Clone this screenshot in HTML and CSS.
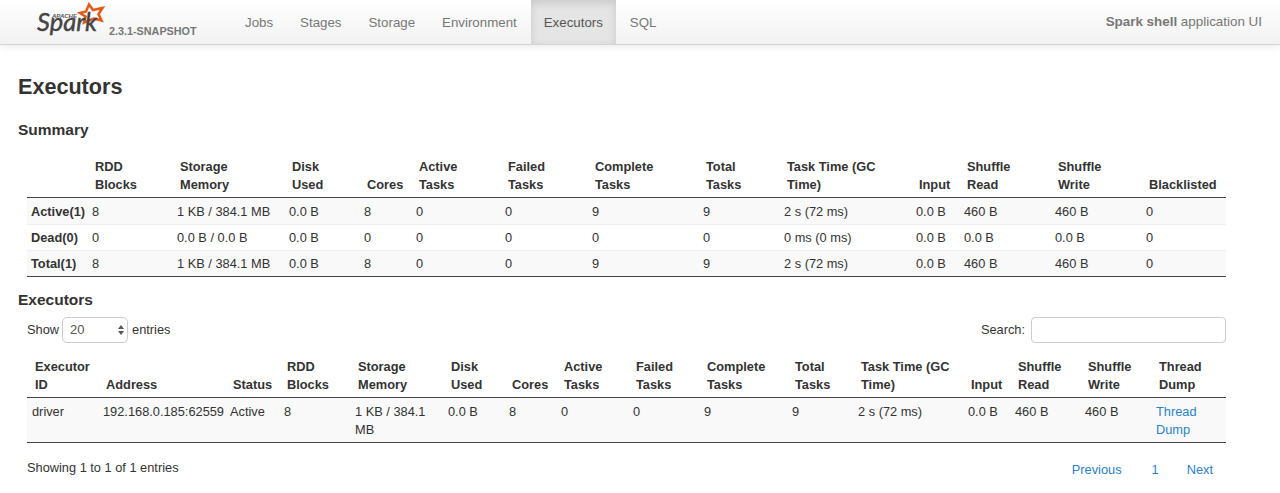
FILE: index.html
```html
<!DOCTYPE html>
<html lang="en">
<head>
<meta charset="utf-8">
<title>Executors</title>
<link rel="stylesheet" href="styles.css">
</head>
<body>
<header class="navbar">
  <a class="brand" href="#">
    <svg class="logo" width="70" height="36" viewBox="0 0 70 36">
      <path class="star" d="M54 2.5 L58 8 L67.5 6 L63.5 12 L66.5 18.5 L59 16.5 L49 20.5 L50.5 14.5 L45 11 L51 9.5 Z"/>
      <text class="logo-apache" x="17" y="15.5" textLength="25" lengthAdjust="spacingAndGlyphs">APACHE</text>
      <text class="logo-spark" x="2" y="29" textLength="60" lengthAdjust="spacingAndGlyphs">Spark</text>
    </svg>
    <span class="version">2.3.1-SNAPSHOT</span>
  </a>
  <nav class="nav">
    <a href="#">Jobs</a>
    <a href="#">Stages</a>
    <a href="#">Storage</a>
    <a href="#">Environment</a>
    <a href="#" class="active">Executors</a>
    <a href="#">SQL</a>
  </nav>
  <p class="app-name"><strong>Spark shell</strong> application UI</p>
</header>

<main class="content">
  <h3>Executors</h3>
  <h4>Summary</h4>
  <table class="grid summary">
    <thead>
      <tr>
        <th></th><th>RDD Blocks</th><th>Storage Memory</th><th>Disk Used</th><th>Cores</th><th>Active Tasks</th><th>Failed Tasks</th><th>Complete Tasks</th><th>Total Tasks</th><th>Task Time (GC Time)</th><th>Input</th><th>Shuffle Read</th><th>Shuffle Write</th><th>Blacklisted</th>
      </tr>
    </thead>
    <tbody>
      <tr><td class="label">Active(1)</td><td>8</td><td>1 KB / 384.1 MB</td><td>0.0 B</td><td>8</td><td>0</td><td>0</td><td>9</td><td>9</td><td>2 s (72 ms)</td><td>0.0 B</td><td>460 B</td><td>460 B</td><td>0</td></tr>
      <tr><td class="label">Dead(0)</td><td>0</td><td>0.0 B / 0.0 B</td><td>0.0 B</td><td>0</td><td>0</td><td>0</td><td>0</td><td>0</td><td>0 ms (0 ms)</td><td>0.0 B</td><td>0.0 B</td><td>0.0 B</td><td>0</td></tr>
      <tr><td class="label">Total(1)</td><td>8</td><td>1 KB / 384.1 MB</td><td>0.0 B</td><td>8</td><td>0</td><td>0</td><td>9</td><td>9</td><td>2 s (72 ms)</td><td>0.0 B</td><td>460 B</td><td>460 B</td><td>0</td></tr>
    </tbody>
  </table>

  <h4 class="second">Executors</h4>
  <div class="controls">
    <label class="length">Show
      <span class="select-wrap">
        <select class="select"><option>20</option></select>
        <svg class="select-arrows" width="6" height="10" viewBox="0 0 6 10"><path d="M3 0 L6 4 H0 Z M0 6 H6 L3 10 Z"/></svg>
      </span>
      entries</label>
    <label class="search">Search: <input class="search-input" type="text"></label>
  </div>
  <table class="grid execs">
    <thead>
      <tr>
        <th>Executor ID</th><th>Address</th><th>Status</th><th>RDD Blocks</th><th>Storage Memory</th><th>Disk Used</th><th>Cores</th><th>Active Tasks</th><th>Failed Tasks</th><th>Complete Tasks</th><th>Total Tasks</th><th>Task Time (GC Time)</th><th>Input</th><th>Shuffle Read</th><th>Shuffle Write</th><th>Thread Dump</th>
      </tr>
    </thead>
    <tbody>
      <tr><td>driver</td><td>192.168.0.185:62559</td><td>Active</td><td>8</td><td>1 KB / 384.1 MB</td><td>0.0 B</td><td>8</td><td>0</td><td>0</td><td>9</td><td>9</td><td>2 s (72 ms)</td><td>0.0 B</td><td>460 B</td><td>460 B</td><td><a href="#">Thread Dump</a></td></tr>
    </tbody>
  </table>
  <div class="footer-row">
    <p class="info">Showing 1 to 1 of 1 entries</p>
    <div class="pager"><a href="#">Previous</a><a href="#">1</a><a href="#">Next</a></div>
  </div>
</main>
</body>
</html>
```
FILE: styles.css
```css
* { box-sizing: border-box; }
html, body { margin: 0; padding: 0; }
body {
  font-family: "Liberation Sans", Arial, sans-serif;
  font-size: 12.8px;
  line-height: 18px;
  color: #333;
  background: #fff;
  overflow: hidden;
}
a { color: #2b82c9; text-decoration: none; }

.navbar {
  display: flex;
  align-items: stretch;
  height: 45px;
  padding-left: 35px;
  padding-right: 18px;
  background: linear-gradient(#fff, #f2f2f2);
  border-bottom: 1px solid #d4d4d4;
  box-shadow: 0 1px 8px rgba(0, 0, 0, .1);
}
.brand { display: flex; align-items: flex-start; width: 197px; }
.logo { flex: none; margin-top: 2px; overflow: visible; }
.star { fill: none; stroke: #e25a1c; stroke-width: 2.6; stroke-linejoin: miter; }
.logo-apache { font: italic bold 4.5px "Liberation Sans", sans-serif; fill: #555; }
.logo-spark { font: italic 25px "Lato", "Liberation Sans", sans-serif; fill: #444; stroke: #444; stroke-width: .4; }
.version { margin: 22px 0 0 4px; font-size: 10.8px; font-weight: bold; color: #777; }
.nav { display: flex; }
.nav a {
  display: flex;
  align-items: center;
  padding: 1px 13px 0;
  margin-right: 1px;
  font-size: 13.3px;
  color: #777;
}
.nav a.active {
  color: #555;
  background: #e5e5e5;
  box-shadow: inset 0 3px 8px rgba(0, 0, 0, .125);
}
.app-name { margin: 13px 0 0 auto; font-size: 13.4px; color: #777; }

.content { padding: 0 54px 0 18px; }
h3 { margin: 28px 0 0; font-size: 21.6px; line-height: 27px; font-weight: bold; }
h4 { margin: 20px 0 0; font-size: 15.5px; line-height: 20px; font-weight: bold; }
h4.second { margin-top: 13px; }

.grid {
  table-layout: fixed;
  border-collapse: collapse;
  width: 1199px;
  margin-left: 9px;
  border-bottom: 1px solid #444;
}
.grid th {
  padding: 0 5px 3px 8px;
  text-align: left;
  vertical-align: bottom;
  font-weight: bold;
  border-bottom: 1px solid #444;
}
.grid td { padding: 4px 5px 3px; vertical-align: top; }
.grid tbody tr:first-child td { padding-top: 5px; }
.summary { margin-top: 18px; }
.summary th { padding-right: 16px; }
.summary td { border-top: 1px solid #eee; }
.summary tbody tr:first-child td { border-top: 0; }
.summary tbody tr:nth-child(odd) { background: #f9f9f9; }
.summary .label { padding-left: 4px; font-weight: bold; }
.execs tbody tr { background: #f9f9f9; }

.summary th:nth-child(1) { width: 60px; }
.summary th:nth-child(2) { width: 85px; }
.summary th:nth-child(3) { width: 112px; }
.summary th:nth-child(4) { width: 75px; }
.summary th:nth-child(5) { width: 52px; }
.summary th:nth-child(6) { width: 89px; }
.summary th:nth-child(7) { width: 87px; }
.summary th:nth-child(8) { width: 111px; }
.summary th:nth-child(9) { width: 81px; }
.summary th:nth-child(10) { width: 132px; }
.summary th:nth-child(11) { width: 48px; }
.summary th:nth-child(12) { width: 91px; }
.summary th:nth-child(13) { width: 91px; }
.summary th:nth-child(14) { width: 85px; }

.execs th:nth-child(1) { width: 71px; }
.execs th:nth-child(2) { width: 127px; }
.execs th:nth-child(3) { width: 54px; }
.execs th:nth-child(4) { width: 71px; }
.execs th:nth-child(5) { width: 93px; }
.execs th:nth-child(6) { width: 61px; }
.execs th:nth-child(7) { width: 52px; }
.execs th:nth-child(8) { width: 72px; }
.execs th:nth-child(9) { width: 71px; }
.execs th:nth-child(10) { width: 88px; }
.execs th:nth-child(11) { width: 66px; }
.execs th:nth-child(12) { width: 110px; }
.execs th:nth-child(13) { width: 47px; }
.execs th:nth-child(14) { width: 70px; }
.execs th:nth-child(15) { width: 71px; }
.execs th:nth-child(16) { width: 75px; }

.controls {
  display: flex;
  justify-content: space-between;
  align-items: flex-start;
  width: 1199px;
  margin: 6px 0 0 9px;
  height: 42px;
}
.length, .search { display: flex; align-items: center; gap: 4px; height: 27px; }
.select-wrap { position: relative; display: block; margin-left: -1px; }
.select {
  appearance: none;
  display: block;
  width: 66px;
  height: 26px;
  padding: 0 7px;
  font: 13px "Liberation Sans", sans-serif;
  color: #555;
  background: #fff;
  border: 1px solid #ccc;
  border-radius: 5px;
}
.select-arrows { position: absolute; right: 4px; top: 8px; fill: #555; }
.search-input {
  width: 195px;
  height: 26px;
  margin-left: 2px;
  background: #fff;
  border: 1px solid #ccc;
  border-radius: 4px;
}

.footer-row {
  display: flex;
  justify-content: space-between;
  align-items: flex-start;
  width: 1199px;
  margin: 16px 0 0 9px;
}
.info { margin: 0; }
.pager { display: flex; margin-top: 2px; padding-right: 13px; }
.pager a:nth-child(2) { margin-left: 30px; }
.pager a:nth-child(3) { margin-left: 28px; }
```
